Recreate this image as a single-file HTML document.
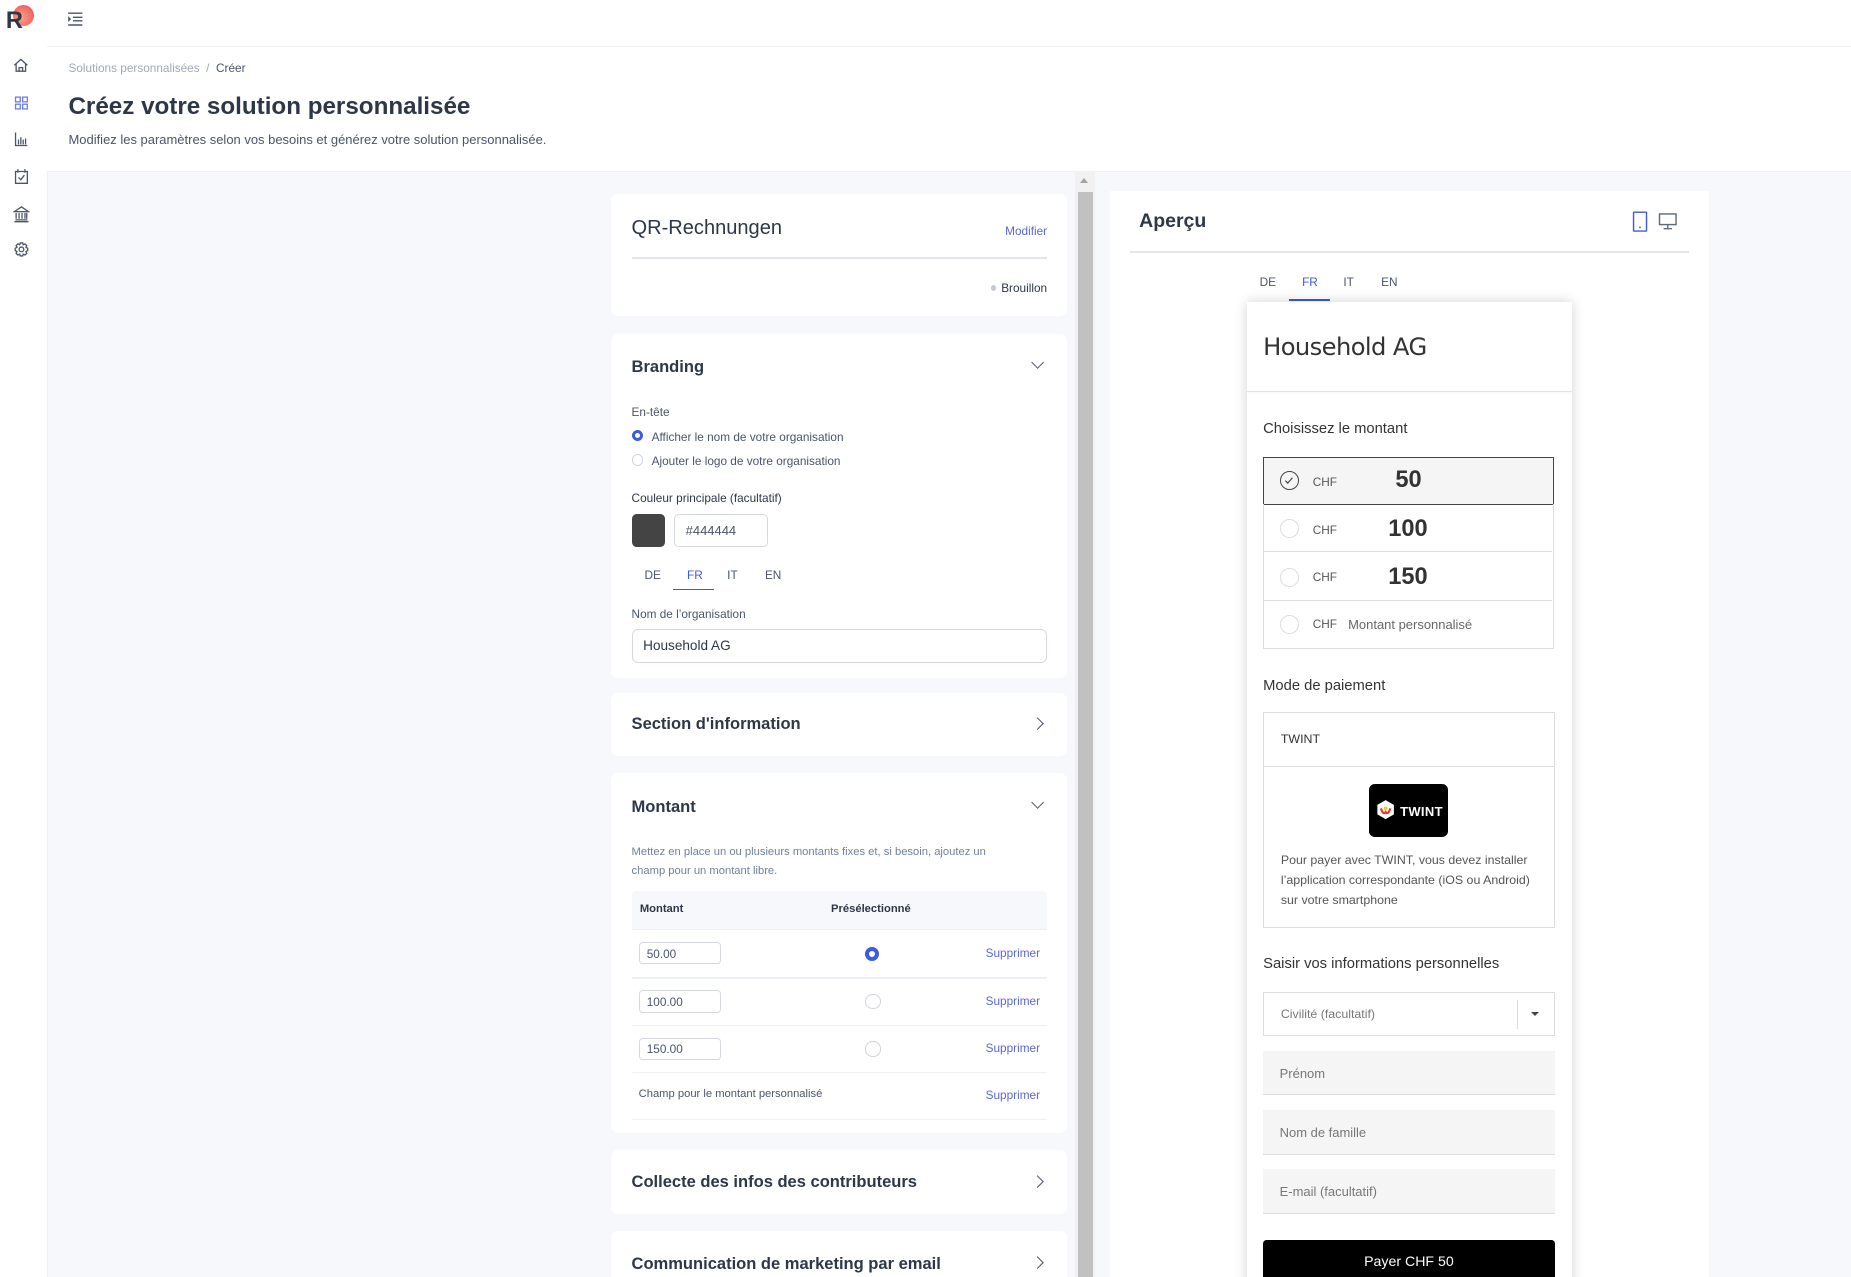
<!DOCTYPE html>
<html><head><meta charset="utf-8">
<style>
html,body{margin:0;padding:0;overflow:hidden;width:1851px;height:1277px;background:#f7f8fc}
#w{zoom:1.1805;position:relative;width:1568px;height:1082px;overflow:hidden;font-family:"Liberation Sans",sans-serif;color:#2d3748}
.a{position:absolute}
.card{position:absolute;left:518px;width:386px;background:#fff;border-radius:6px}
.h{font-size:14px;font-weight:bold;color:#2d3748}
.chev{position:absolute;right:21px;width:7px;height:7px;border-right:1.3px solid #4a5568;border-bottom:1.3px solid #4a5568}
.s{font-size:10px;color:#4a5568}
.lnk{color:#5a67d8;font-size:10px}
.rad{position:absolute;width:10px;height:10px;border:1px solid #d0d4da;border-radius:50%;box-sizing:border-box}
.inp{position:absolute;border:1px solid #d5d9df;border-radius:3px;box-sizing:border-box;font-size:10px;color:#4a5568}
.row{position:absolute;left:1070px;width:246px;box-sizing:border-box}
.gf{position:absolute;left:1070px;width:247px;height:38px;background:#f5f5f5;border-bottom:1px solid #ddd;box-sizing:border-box;font-size:11px;color:#777;padding:13px 0 0 14px}
</style></head><body><div id="w">
<div class="a" style="left:0;top:0;width:40px;height:1082px;background:#fff;border-right:1px solid #eef0f4"></div>
<div class="a" style="left:11px;top:4px;width:18px;height:18px;border-radius:50%;background:radial-gradient(circle at 40% 60%,#fba08a,#ee4a4a)"></div>
<div class="a" style="left:5px;top:7px;font-size:20px;font-weight:bold;color:#2d3748">R</div>
<svg class="a" style="left:10px;top:48px" width="15" height="180" fill="none" stroke="#4a5568" stroke-width="1.1">
<path d="M2 7 L7.5 2 L13 7 M3.5 6 V12 H11.5 V6 M6 12 V9 H9 V12"/>
<g stroke="#6b7ee8"><rect x="3" y="34" width="4" height="4"/><rect x="9" y="34" width="4" height="4"/><rect x="3" y="40" width="4" height="4"/><rect x="9" y="40" width="4" height="4"/></g>
<path d="M3 64 V75 H13 M5.5 74 V70 M7.5 74 V68 M9.5 74 V70 M11.5 74 V69"/>
<path d="M3 97 H13 V107 H3 Z M5 95 V98 M11 95 V98 M5.5 102 L7.5 104 L10.5 100"/>
<path d="M2 131 L8 127 L14 131 Z M3 138 H13 M3.5 132 V137 M6 132 V137 M8.5 132 V137 M11 132 V137 M12.5 132 V137 M2 139.5 H14"/>
<circle cx="8" cy="163" r="2"/><path d="M7 157.5 H9 L9.5 159 L11 158.3 L12.5 159.7 L11.8 161.2 L13.3 162 V164 L11.8 164.8 L12.5 166.3 L11 167.7 L9.5 167 L9 168.5 H7 L6.5 167 L5 167.7 L3.5 166.3 L4.2 164.8 L2.7 164 V162 L4.2 161.2 L3.5 159.7 L5 158.3 L6.5 159 Z"/>
</svg>
<div class="a" style="left:40px;top:0;width:1528px;height:145px;background:#fff;border-bottom:1px solid #edf0f5"></div>
<div class="a" style="left:40px;top:39px;width:1528px;height:1px;background:#eef0f4"></div>
<svg class="a" style="left:57px;top:10px" width="14" height="12" stroke="#4a5568" stroke-width="1.2"><path d="M1 1H13 M5 4.5H13 M5 7.5H13 M1 11H13"/><path d="M1 3.5 L3.5 6 L1 8.5Z" fill="#4a5568" stroke="none"/></svg>
<div class="a" style="left:58px;top:52px;font-size:10px;color:#a0a8b5">Solutions personnalisées &nbsp;/&nbsp; <span style="color:#4a5568">Créer</span></div>
<div class="a" style="left:58px;top:79px;font-size:20.5px;font-weight:bold;color:#2d3748">Créez votre solution personnalisée</div>
<div class="a" style="left:58px;top:112px;font-size:11px;color:#4a5568">Modifiez les paramètres selon vos besoins et générez votre solution personnalisée.</div>
<div class="a" style="left:911px;top:146px;width:17px;height:936px;background:#f1f1f1"></div>
<div class="a" style="left:913px;top:163px;width:13px;height:919px;background:#c1c1c1"></div>
<div class="a" style="left:915px;top:151px;width:0;height:0;border-left:4px solid transparent;border-right:4px solid transparent;border-bottom:5px solid #a3a3a3"></div>
<div class="card" style="top:164px;height:104px">
 <div class="a" style="left:17px;top:20px;font-size:17px;color:#2d3748">QR-Rechnungen</div>
 <div class="a lnk" style="right:17px;top:26px">Modifier</div>
 <div class="a" style="left:17px;top:54px;width:352px;height:1px;background:#e2e5ea"></div>
 <div class="a" style="right:17px;top:74px;font-size:10px;color:#2d3748"><span style="display:inline-block;width:5px;height:5px;border-radius:50%;background:#c8ccd2;margin-right:4px;vertical-align:1px"></span>Brouillon</div>
</div>
<div class="card" style="top:283px;height:291px">
 <div class="a h" style="left:17px;top:19px">Branding</div>
 <div class="chev" style="top:20px;transform:rotate(45deg)"></div>
 <div class="a s" style="left:17px;top:60px">En-tête</div>
 <div class="rad" style="left:17px;top:81px;border:3px solid #3d5ae0"></div>
 <div class="a s" style="left:34px;top:81px">Afficher le nom de votre organisation</div>
 <div class="rad" style="left:17px;top:102px"></div>
 <div class="a s" style="left:34px;top:102px">Ajouter le logo de votre organisation</div>
 <div class="a" style="left:17px;top:133px;font-size:10px;color:#2d3748">Couleur principale (facultatif)</div>
 <div class="a" style="left:17px;top:152px;width:28px;height:28px;border-radius:4px;background:#444"></div>
 <div class="inp" style="left:53px;top:152px;width:80px;height:28px;border-radius:4px;padding:7px 0 0 9px;font-size:11px">#444444</div>
 <div class="a" style="left:28px;top:198px;font-size:10px;color:#4a5568">DE</div>
 <div class="a" style="left:64px;top:198px;font-size:10px;color:#3d5ae0">FR</div>
 <div class="a" style="left:52px;top:216px;width:35px;height:1px;background:#3d5ae0"></div>
 <div class="a" style="left:98px;top:198px;font-size:10px;color:#4a5568">IT</div>
 <div class="a" style="left:130px;top:198px;font-size:10px;color:#4a5568">EN</div>
 <div class="a s" style="left:17px;top:231px">Nom de l’organisation</div>
 <div class="inp" style="left:17px;top:250px;width:352px;height:29px;border-radius:5px;padding:7px 0 0 9px;font-size:11.5px;color:#2d3748">Household AG</div>
</div>
<div class="card" style="top:587px;height:53px">
 <div class="a h" style="left:17px;top:18px">Section d'information</div>
 <div class="chev" style="top:22px;transform:rotate(-45deg)"></div>
</div>
<div class="card" style="top:655px;height:305px">
 <div class="a h" style="left:17px;top:20px">Montant</div>
 <div class="chev" style="top:21px;transform:rotate(45deg)"></div>
 <div class="a" style="left:17px;top:59px;width:325px;font-size:9.5px;line-height:16.5px;color:#718096">Mettez en place un ou plusieurs montants fixes et, si besoin, ajoutez un champ pour un montant libre.</div>
 <div class="a" style="left:17px;top:100px;width:352px;height:32px;background:#f7f8fc;border-radius:4px 4px 0 0"></div>
 <div class="a" style="left:24px;top:110px;font-size:9.5px;font-weight:bold;color:#2d3748">Montant</div>
 <div class="a" style="left:186px;top:110px;font-size:9.5px;font-weight:bold;color:#2d3748">Présélectionné</div>
 <div class="a" style="left:17px;top:132px;width:352px;height:1px;background:#edf0f4"></div>
 <div class="inp" style="left:23px;top:143px;width:70px;height:19px;padding:3px 0 0 6px">50.00</div>
 <div class="rad" style="left:215px;top:147px;width:12px;height:12px;border:3.5px solid #3d5ae0"></div>
 <div class="a lnk" style="right:23px;top:146px">Supprimer</div>
 <div class="a" style="left:17px;top:173px;width:352px;height:1px;background:#edf0f4"></div>
 <div class="inp" style="left:23px;top:184px;width:70px;height:19px;padding:3px 0 0 6px">100.00</div>
 <div class="rad" style="left:215px;top:187px;width:13px;height:13px"></div>
 <div class="a lnk" style="right:23px;top:187px">Supprimer</div>
 <div class="a" style="left:17px;top:213px;width:352px;height:1px;background:#edf0f4"></div>
 <div class="inp" style="left:23px;top:224px;width:70px;height:19px;padding:3px 0 0 6px">150.00</div>
 <div class="rad" style="left:215px;top:227px;width:13px;height:13px"></div>
 <div class="a lnk" style="right:23px;top:227px">Supprimer</div>
 <div class="a" style="left:17px;top:253px;width:352px;height:1px;background:#edf0f4"></div>
 <div class="a" style="left:23px;top:267px;font-size:9.5px;color:#4a5568">Champ pour le montant personnalisé</div>
 <div class="a lnk" style="right:23px;top:267px">Supprimer</div>
 <div class="a" style="left:17px;top:293px;width:352px;height:1px;background:#edf0f4"></div>
</div>
<div class="card" style="top:974px;height:54px">
 <div class="a h" style="left:17px;top:19px">Collecte des infos des contributeurs</div>
 <div class="chev" style="top:23px;transform:rotate(-45deg)"></div>
</div>
<div class="card" style="top:1043px;height:60px">
 <div class="a h" style="left:17px;top:19px">Communication de marketing par email</div>
 <div class="chev" style="top:23px;transform:rotate(-45deg)"></div>
</div>
<div class="a" style="left:940px;top:162px;width:508px;height:930px;background:#fff"></div>
<div class="a" style="left:965px;top:178px;font-size:16.5px;color:#2d3748;font-weight:bold">Aperçu</div>
<svg class="a" style="left:1381px;top:179px" width="42" height="18" fill="none" stroke-width="1.2">
<rect x="3" y="1" width="11" height="16" stroke="#3d5ae0" rx="0.5"/><rect x="7.8" y="13.2" width="1.3" height="1.3" fill="#3d5ae0" stroke="none"/>
<rect x="25" y="2.5" width="14" height="9" stroke="#5f6b7c"/><path d="M32 11.5 V14.5 M28.5 15 H35.5" stroke="#5f6b7c"/>
</svg>
<div class="a" style="left:957px;top:213px;width:474px;height:1px;background:#e6e6e6"></div>
<div class="a" style="left:1067px;top:233px;font-size:10px;color:#4a5568">DE</div>
<div class="a" style="left:1103px;top:233px;font-size:10px;color:#3d5ae0">FR</div>
<div class="a" style="left:1092px;top:253px;width:35px;height:2px;background:#3d5ae0"></div>
<div class="a" style="left:1138px;top:233px;font-size:10px;color:#4a5568">IT</div>
<div class="a" style="left:1170px;top:233px;font-size:10px;color:#4a5568">EN</div>
<div class="a" style="left:1056px;top:256px;width:276px;height:840px;background:#fff;box-shadow:0 0 10px rgba(0,0,0,.18)"></div>
<div class="a" style="left:1056px;top:331px;width:276px;height:1px;background:#e2e2e2;box-shadow:0 1px 2px rgba(0,0,0,.06)"></div>
<div class="a" style="left:1070px;top:282px;font-size:20.5px;color:#333;font-family:'DejaVu Sans',sans-serif;letter-spacing:-0.5px">Household AG</div>
<div class="a" style="left:1070px;top:357px;font-size:12.5px;color:#333">Choisissez le montant</div>
<div class="row" style="top:387px;height:41px;background:#f5f5f5;border:1px solid #444"></div>
<div class="row" style="top:427px;height:123px;border:1px solid #ddd;border-top:none"></div>
<div class="a" style="left:1071px;top:467px;width:244px;height:1px;background:#ddd"></div>
<div class="a" style="left:1071px;top:508px;width:244px;height:1px;background:#ddd"></div>
<div class="rad" style="left:1084px;top:399px;width:16px;height:16px;border:1.2px solid #444"></div>
<svg class="a" style="left:1087px;top:403px" width="10" height="8"><path d="M2 4 L4 6 L8 1.5" stroke="#444" stroke-width="1" fill="none"/></svg>
<div class="rad" style="left:1084px;top:440px;width:16px;height:16px;border-color:#ddd"></div>
<div class="rad" style="left:1084px;top:481px;width:16px;height:16px;border-color:#ddd"></div>
<div class="rad" style="left:1084px;top:521px;width:16px;height:16px;border-color:#ddd"></div>
<div class="a" style="left:1112px;top:402px;font-size:10px;color:#555">CHF</div>
<div class="a" style="left:1112px;top:443px;font-size:10px;color:#555">CHF</div>
<div class="a" style="left:1112px;top:483px;font-size:10px;color:#555">CHF</div>
<div class="a" style="left:1112px;top:523px;font-size:10px;color:#555">CHF</div>
<div class="a" style="left:1182px;top:396px;font-size:20px;font-weight:bold;color:#333">50</div>
<div class="a" style="left:1176px;top:437px;font-size:20px;font-weight:bold;color:#333">100</div>
<div class="a" style="left:1176px;top:478px;font-size:20px;font-weight:bold;color:#333">150</div>
<div class="a" style="left:1142px;top:523px;font-size:11px;color:#666">Montant personnalisé</div>
<div class="a" style="left:1070px;top:574px;font-size:12.5px;color:#333">Mode de paiement</div>
<div class="row" style="top:603px;height:183px;width:247px;border:1px solid #ddd"></div>
<div class="a" style="left:1071px;top:649px;width:245px;height:1px;background:#ddd"></div>
<div class="a" style="left:1085px;top:620px;font-size:10.5px;color:#333">TWINT</div>
<div class="a" style="left:1160px;top:664px;width:67px;height:45px;background:#000;border-radius:5px"></div>
<svg class="a" style="left:1165px;top:677px" width="18" height="19"><path d="M9 1 L16 5 V13 L9 17 L2 13 V5Z" fill="#fff"/><path d="M5 8 Q7 14 9 11 Q11 14 13 8" stroke="#e33" stroke-width="1.8" fill="none"/><circle cx="9" cy="8" r="1.6" fill="#fc0"/></svg>
<div class="a" style="left:1186px;top:681px;font-size:11px;font-weight:bold;color:#fff;letter-spacing:0.3px">TWINT</div>
<div class="a" style="left:1085px;top:720px;width:218px;font-size:10.5px;line-height:17px;color:#555">Pour payer avec TWINT, vous devez installer l’application correspondante (iOS ou Android) sur votre smartphone</div>
<div class="a" style="left:1070px;top:810px;font-size:12.5px;color:#333">Saisir vos informations personnelles</div>
<div class="row" style="top:840px;height:38px;width:247px;border:1px solid #ddd"></div>
<div class="a" style="left:1085px;top:853px;font-size:10.5px;color:#777">Civilité (facultatif)</div>
<div class="a" style="left:1285px;top:847px;width:1px;height:25px;background:#ddd"></div>
<div class="a" style="left:1297px;top:857px;border-left:3.5px solid transparent;border-right:3.5px solid transparent;border-top:3.5px solid #444"></div>
<div class="gf" style="top:890px">Prénom</div>
<div class="gf" style="top:940px">Nom de famille</div>
<div class="gf" style="top:990px">E-mail (facultatif)</div>
<div class="a" style="left:1070px;top:1050px;width:247px;height:40px;background:#000;border-radius:3px;color:#fff;font-size:12px;text-align:center;padding-top:12px;box-sizing:border-box">Payer CHF 50</div>
</div></body></html>
